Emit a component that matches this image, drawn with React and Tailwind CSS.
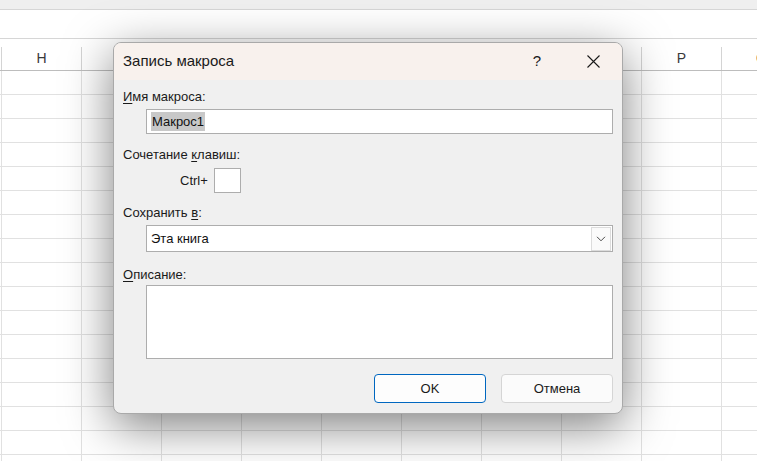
import React from 'react'

const columns = ['H', 'I', 'J', 'K', 'L', 'M', 'N', 'O', 'P', 'Q']
const hiddenHeaders = ['I', 'J', 'K', 'L', 'M', 'N', 'O']
const rows = Array.from({ length: 17 })

const Sheet = () => (
  <div className="w-[757px] h-[461px] bg-white">
    {/* Ribbon strip and formula bar */}
    <div className="h-[10px] bg-[#efefef] border-b border-[#d6d6d6]" />
    <div className="h-[29px] bg-white border-b border-[#d6d6d6]" />

    {/* Column headers */}
    <div className="h-[8px]" />
    <div className="flex pl-[1px] h-[24px] border-b border-[#bdbdbd]">
      {columns.map((c) => (
        <div
          key={c}
          className="w-[80px] shrink-0 border-l border-[#d4d4d4] flex items-center justify-center text-[14px] text-[#3a3a3a]"
        >
          {hiddenHeaders.includes(c) ? '' : c}
        </div>
      ))}
    </div>

    {/* Cells */}
    {rows.map((_, r) => (
      <div key={r} className="flex pl-[1px] h-[24px] border-b border-[#e1e1e1]">
        {columns.map((c) => (
          <div key={c} className="w-[80px] shrink-0 border-l border-[#e1e1e1]" />
        ))}
      </div>
    ))}
  </div>
)

const Label = ({ hot, rest, className = '' }) => (
  <div className={`h-[16px] leading-[16px] text-[13px] text-[#1a1a1a] ${className}`}>
    <span className="underline underline-offset-2 decoration-1">{hot}</span>
    {rest}
  </div>
)

const MacroDialog = () => (
  <div className="absolute left-[113px] top-[42px] w-[510px] h-[372px] rounded-[8px] border border-[#a9a9a9] bg-[#f0f0f0] overflow-hidden shadow-[0_12px_48px_rgba(0,0,0,0.5)] flex flex-col">
    {/* Title bar */}
    <div className="h-[37px] shrink-0 bg-[#f8f1ed] flex items-center pl-[9px]">
      <span className="text-[15px] text-[#1a1a1a]">Запись макроса</span>
      <span className="ml-auto w-[20px] text-center text-[15px] text-[#1a1a1a] mr-[40px]">?</span>
      <svg width="13" height="13" viewBox="0 0 13 13" className="mr-[22px]">
        <path d="M0.5 0.5 L12.5 12.5 M12.5 0.5 L0.5 12.5" stroke="#1a1a1a" strokeWidth="1.1" fill="none" />
      </svg>
    </div>

    <div className="flex flex-col pl-[9px] pr-[9px]">
      <Label hot="И" rest="мя макроса:" className="mt-[9px]" />
      <div className="mt-[4px] ml-[23px] h-[25px] border border-[#adadad] bg-white flex items-center pl-[4px]">
        <span className="bg-[#c8c8c8] text-[13px] leading-[19px] px-[1px] text-[#111]">Макрос1</span>
      </div>

      <div className="mt-[13px] h-[16px] leading-[16px] text-[13px] text-[#1a1a1a]">
        Сочетание <span className="underline underline-offset-2 decoration-1">к</span>лавиш:
      </div>
      <div className="mt-[5px] flex items-center h-[25px]">
        <span className="ml-[57px] text-[13px] text-[#1a1a1a]">Ctrl+</span>
        <div className="ml-[6px] w-[27px] h-[25px] border border-[#adadad] bg-white" />
      </div>

      <div className="mt-[12px] h-[16px] leading-[16px] text-[13px] text-[#1a1a1a]">
        Сохранить <span className="underline underline-offset-2 decoration-1">в</span>:
      </div>
      <div className="mt-[4px] ml-[23px] h-[27px] border border-[#adadad] bg-white flex items-center">
        <span className="pl-[4px] text-[13px] text-[#111]">Эта книга</span>
        <div className="ml-auto mr-[1px] h-[24px] w-[20px] border border-[#dcdcdc] bg-[#fafafa] flex items-center justify-center">
          <svg width="10" height="6" viewBox="0 0 10 6">
            <path d="M1 0.8 L5 4.8 L9 0.8" stroke="#4a4a4a" strokeWidth="1" fill="none" />
          </svg>
        </div>
      </div>

      <Label hot="О" rest="писание:" className="mt-[15px]" />
      <div className="mt-[2px] ml-[23px] h-[74px] border border-[#adadad] bg-white" />

      <div className="mt-[15px] flex justify-end gap-[15px]">
        <button className="w-[112px] h-[29px] rounded-[4px] border border-[#0067c0] bg-[#fdfdfd] text-[13px] text-[#1a1a1a]">
          OK
        </button>
        <button className="w-[112px] h-[29px] rounded-[4px] border border-[#d5d5d5] bg-[#fbfbfb] text-[13px] text-[#1a1a1a]">
          Отмена
        </button>
      </div>
    </div>
  </div>
)

export default function App() {
  return (
    <div className="relative w-[757px] h-[461px] overflow-hidden font-['Liberation_Sans',Arial,sans-serif]">
      <Sheet />
      <MacroDialog />
    </div>
  )
}
